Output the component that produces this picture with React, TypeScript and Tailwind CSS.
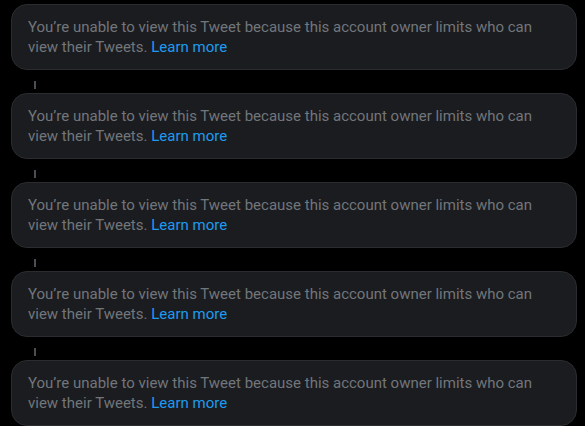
import React from "react";

function Card() {
  return (
    <div className="w-[566px] rounded-[16px] border border-[#2a2c30] bg-[#1b1c20] px-[16px] py-[12px] text-[15px] leading-[20px] text-[#71767b]" style={{ fontFamily: "Roboto, 'Open Sans', sans-serif" }}>
      You’re unable to view this Tweet because this account owner limits who can view their Tweets.{" "}
      <span className="text-[#1d9bf0]">Learn more</span>
    </div>
  );
}

export default function App() {
  const items = [0, 1, 2, 3, 4];
  return (
    <div className="min-h-[426px] w-[585px] bg-black pt-[4px] pl-[11px]">
      {items.map((i) => (
        <div key={i} className="flex flex-col">
          <Card />
          {i < items.length - 1 && (
            <div className="h-[23px]">
              <div className="ml-[23px] mt-[11px] h-[8px] w-[2px] bg-[#4b4e52]" />
            </div>
          )}
        </div>
      ))}
    </div>
  );
}
